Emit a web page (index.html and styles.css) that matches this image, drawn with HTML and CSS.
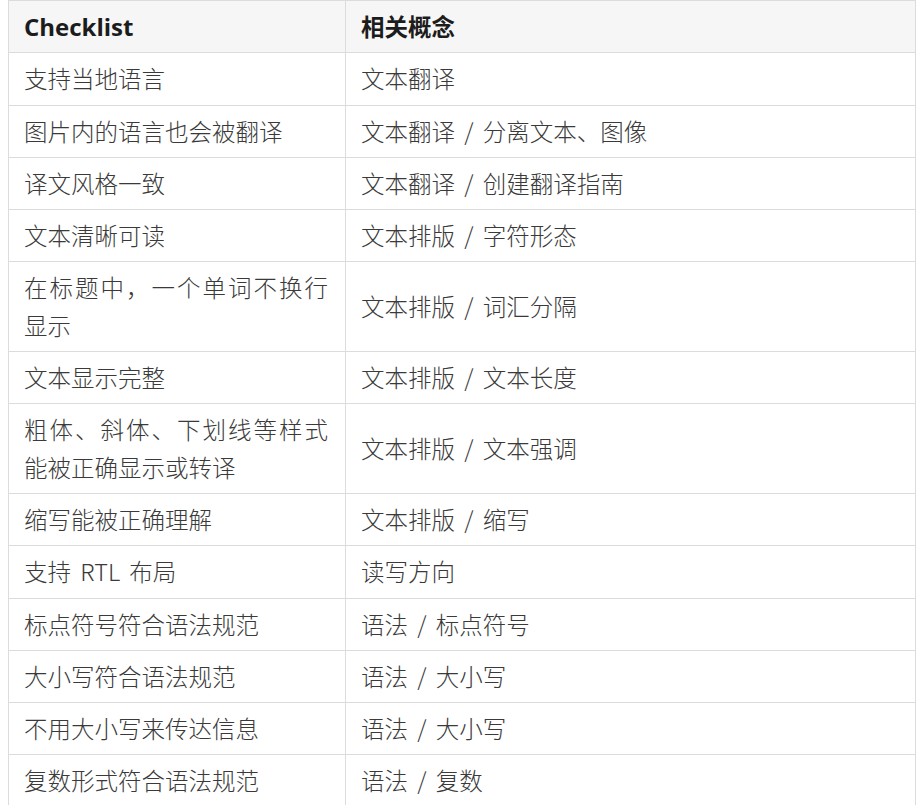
FILE: index.html
```html
<!DOCTYPE html>
<html lang="zh-CN">
<head>
<meta charset="utf-8">
<title>Checklist</title>
<link rel="stylesheet" href="styles.css">
</head>
<body>
<table class="checklist">
  <thead>
    <tr><th class="col-a">Checklist</th><th class="col-b">相关概念</th></tr>
  </thead>
  <tbody>
    <tr><td>支持当地语言</td><td>文本翻译</td></tr>
    <tr><td>图片内的语言也会被翻译</td><td>文本翻译 / 分离文本、图像</td></tr>
    <tr><td>译文风格一致</td><td>文本翻译 / 创建翻译指南</td></tr>
    <tr><td>文本清晰可读</td><td>文本排版 / 字符形态</td></tr>
    <tr><td>在标题中，一个单词不换行显示</td><td>文本排版 / 词汇分隔</td></tr>
    <tr><td>文本显示完整</td><td>文本排版 / 文本长度</td></tr>
    <tr><td>粗体、斜体、下划线等样式能被正确显示或转译</td><td>文本排版 / 文本强调</td></tr>
    <tr><td>缩写能被正确理解</td><td>文本排版 / 缩写</td></tr>
    <tr><td>支持 RTL 布局</td><td>读写方向</td></tr>
    <tr><td>标点符号符合语法规范</td><td>语法 / 标点符号</td></tr>
    <tr><td>大小写符合语法规范</td><td>语法 / 大小写</td></tr>
    <tr><td>不用大小写来传达信息</td><td>语法 / 大小写</td></tr>
    <tr><td>复数形式符合语法规范</td><td>语法 / 复数</td></tr>
  </tbody>
</table>
</body>
</html>
```

FILE: styles.css
```css
html, body {
  margin: 0;
  padding: 0;
  background: #ffffff;
}
body {
  padding-left: 8px;
}
.checklist {
  border-collapse: collapse;
  width: 908px;
  table-layout: fixed;
  font-family: "Noto Sans CJK SC", "Noto Sans", sans-serif;
  font-size: 23.5px;
  line-height: 37.3px;
  color: #3a3a3a;
}
.checklist th,
.checklist td {
  border: 1px solid #dcdcdc;
  padding: 7px 17px 7px 15px;
  vertical-align: middle;
  text-align: justify;
}
.checklist td {
  font-weight: 300;
  word-spacing: 4px;
}
.checklist th {
  background: #f6f6f6;
  font-weight: 700;
  color: #1c1c1c;
  text-align: left;
}
.checklist .col-a {
  width: 304px;
  font-family: "Open Sans", "Noto Sans CJK SC", sans-serif;
  font-size: 24px;
}
.checklist .col-b {
  font-family: "Noto Sans CJK SC", sans-serif;
}
```
